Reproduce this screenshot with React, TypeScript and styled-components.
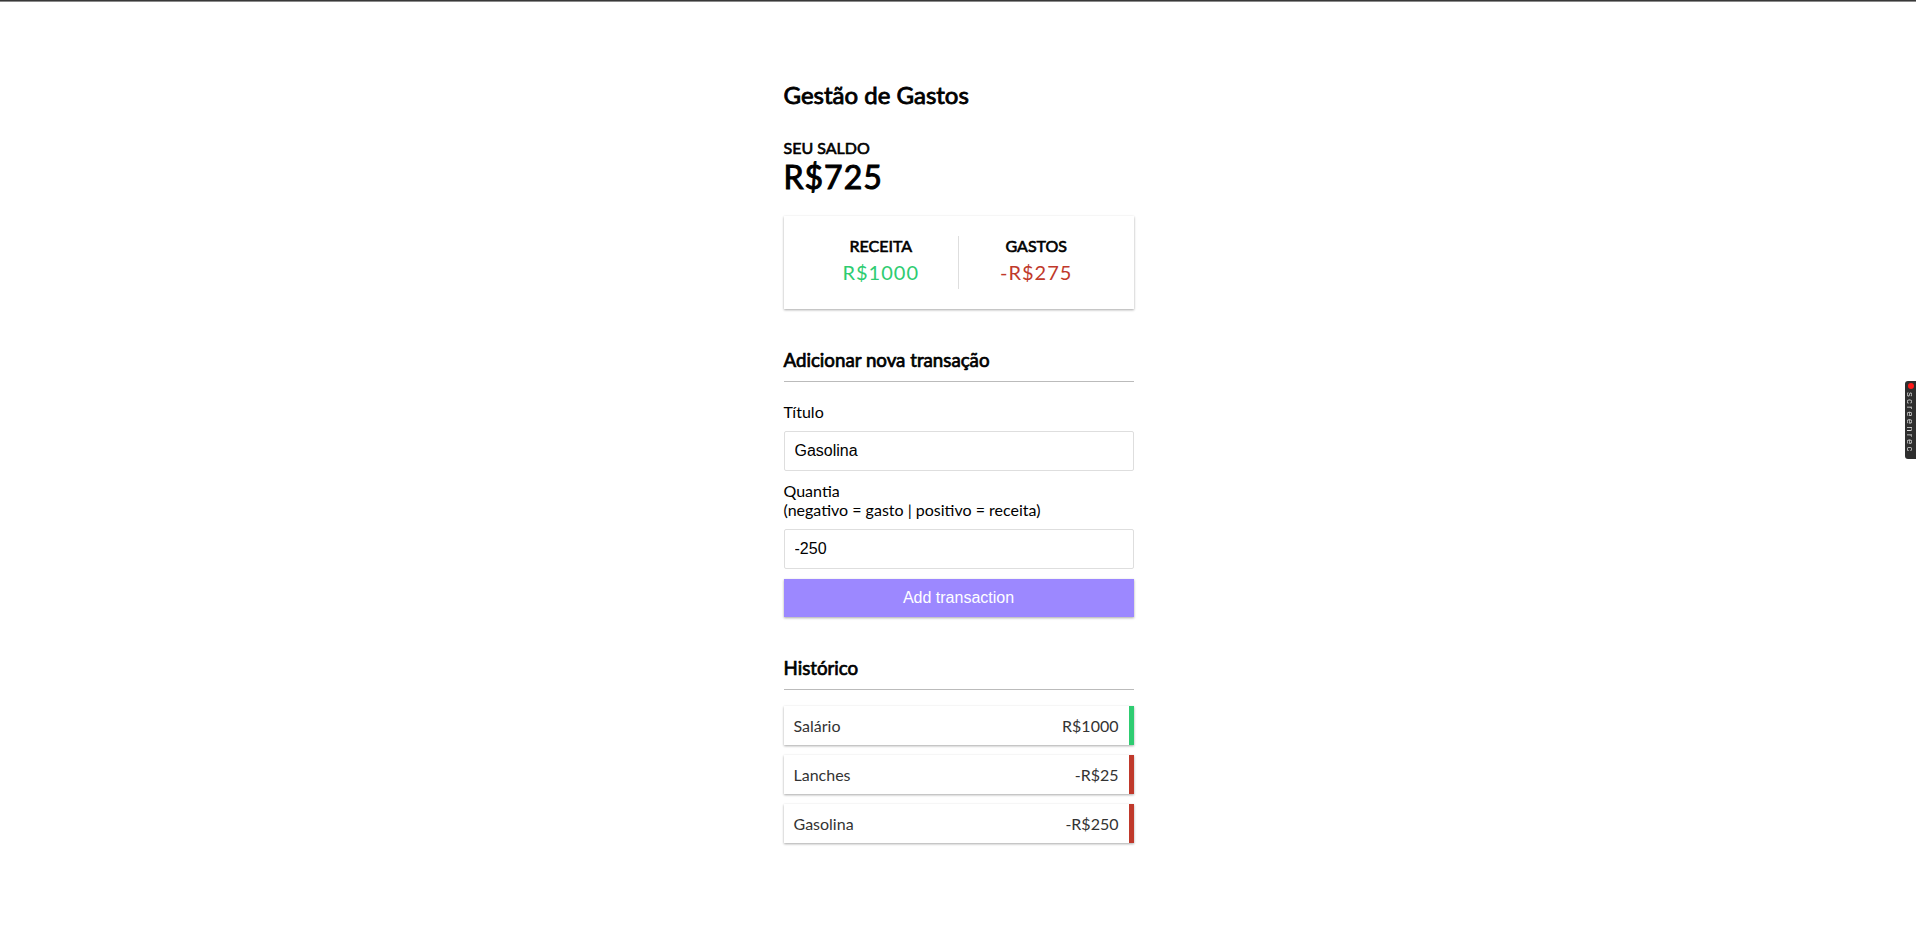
import React from "react";
import styled, { createGlobalStyle } from "styled-components";

const GlobalStyle = createGlobalStyle`
  * { box-sizing: border-box; }
  html, body { margin: 0; padding: 0; background: #fff; }
  body {
    font-family: Lato, "Noto Sans", sans-serif;
    color: #000;
    line-height: normal;
  }
`;

const TopBar = styled.div`
  height: 2px;
  background: #383838;
  border-bottom: 1px solid #8a8a8a;
`;

const Container = styled.div`
  width: 350px;
  margin: 78px auto 30px;
  position: relative;
  left: 0.5px;
`;

const Title = styled.h2`
  font-size: 24px;
  margin: 0 0 29px;
  font-weight: 400;
  -webkit-text-stroke: 0.85px currentColor;
`;

const Caption = styled.h4`
  font-size: 16px;
  margin: 0;
  text-transform: uppercase;
  font-weight: 400;
  -webkit-text-stroke: 0.62px currentColor;
`;

const Balance = styled.h1`
  font-size: 32px;
  letter-spacing: 1px;
  margin: 0;
  font-weight: 400;
  -webkit-text-stroke: 1px currentColor;
`;

const shadow = "0 1px 3px rgba(0,0,0,0.12), 0 1px 2px rgba(0,0,0,0.24)";

const IncExp = styled.div`
  background: #fff;
  box-shadow: ${shadow};
  padding: 20px;
  display: flex;
  justify-content: space-between;
  margin: 20px 0;
`;

const IncExpCol = styled.div<{ $divider?: boolean }>`
  flex: 1;
  text-align: center;
  border-right: ${(p) => (p.$divider ? "1px solid #dedede" : "none")};
`;

const Money = styled.p<{ $kind: "plus" | "minus" }>`
  font-size: 20px;
  letter-spacing: 1px;
  margin: 5px 0;
  color: ${(p) => (p.$kind === "plus" ? "#2ecc71" : "#c0392b")};
`;

const SectionTitle = styled.h3`
  font-size: 18.72px;
  font-weight: 400;
  -webkit-text-stroke: 0.7px currentColor;
  border-bottom: 1px solid #bbb;
  padding-bottom: 10px;
  margin: 40px 0 10px;
`;

const Field = styled.div``;

const Label = styled.label`
  display: inline-block;
  margin: 10px 0;
  font-size: 16px;
`;

const Input = styled.input`
  border: 1px solid #dedede;
  border-radius: 2px;
  display: block;
  font-size: 16px;
  font-family: "Liberation Sans", Arial, sans-serif;
  padding: 10px;
  width: 100%;
  color: #000;
  outline: none;
`;

const Button = styled.button`
  cursor: pointer;
  background-color: #9c88ff;
  box-shadow: ${shadow};
  color: #fff;
  border: 0;
  display: block;
  font-size: 16px;
  font-family: "Liberation Sans", Arial, sans-serif;
  margin: 10px 0 30px;
  padding: 10px;
  width: 100%;
`;

const List = styled.ul`
  list-style-type: none;
  padding: 0;
  margin: 16px 0 40px;
`;

const Item = styled.li<{ $kind: "plus" | "minus" }>`
  background-color: #fff;
  box-shadow: ${shadow};
  color: #333;
  display: flex;
  justify-content: space-between;
  padding: 10px;
  margin: 10px 0;
  font-size: 16px;
  border-right: 5px solid ${(p) => (p.$kind === "plus" ? "#2ecc71" : "#c0392b")};
`;

const RecBadge = styled.div`
  position: fixed;
  right: 0;
  top: 381px;
  width: 11px;
  height: 78px;
  background: #2e2e2e;
  border-radius: 3px 0 0 3px;
  display: flex;
  flex-direction: column;
  align-items: center;
  padding-top: 2px;
`;

const RecDot = styled.span`
  width: 6px;
  height: 6px;
  border-radius: 50%;
  background: #ff1a1a;
  flex: none;
`;

const RecText = styled.span`
  writing-mode: vertical-rl;
  font-family: "Liberation Sans", Arial, sans-serif;
  font-size: 9.5px;
  letter-spacing: 2.2px;
  line-height: 11px;
  color: #d8d8d8;
  margin-top: 3px;
  white-space: nowrap;
`;

const transactions = [
  { id: 1, text: "Salário", amount: 1000 },
  { id: 2, text: "Lanches", amount: -25 },
  { id: 3, text: "Gasolina", amount: -250 },
];

const fmt = (n: number) => (n < 0 ? `-R$${Math.abs(n)}` : `R$${n}`);

export default function App() {
  const total = transactions.reduce((a, t) => a + t.amount, 0);
  const income = transactions.filter((t) => t.amount > 0).reduce((a, t) => a + t.amount, 0);
  const expense = transactions.filter((t) => t.amount < 0).reduce((a, t) => a + t.amount, 0);
  return (
    <>
      <GlobalStyle />
      <TopBar />
      <Container>
        <Title>Gestão de Gastos</Title>
        <Caption>Seu Saldo</Caption>
        <Balance>R${total}</Balance>
        <IncExp>
          <IncExpCol $divider>
            <Caption>Receita</Caption>
            <Money $kind="plus">R${income}</Money>
          </IncExpCol>
          <IncExpCol>
            <Caption>Gastos</Caption>
            <Money $kind="minus">{fmt(expense)}</Money>
          </IncExpCol>
        </IncExp>
        <SectionTitle>Adicionar nova transação</SectionTitle>
        <form onSubmit={(e) => e.preventDefault()}>
          <Field>
            <Label htmlFor="text">Título</Label>
            <Input id="text" type="text" defaultValue="Gasolina" />
          </Field>
          <Field>
            <Label htmlFor="amount">
              Quantia
              <br />
              (negativo = gasto | positivo = receita)
            </Label>
            <Input id="amount" type="number" defaultValue={-250} />
          </Field>
          <Button type="submit">Add transaction</Button>
        </form>
        <SectionTitle>Histórico</SectionTitle>
        <List>
          {transactions.map((t) => (
            <Item key={t.id} $kind={t.amount < 0 ? "minus" : "plus"}>
              {t.text}
              <span>{fmt(t.amount)}</span>
            </Item>
          ))}
        </List>
      </Container>
      <RecBadge>
        <RecDot />
        <RecText>screenrec</RecText>
      </RecBadge>
    </>
  );
}
